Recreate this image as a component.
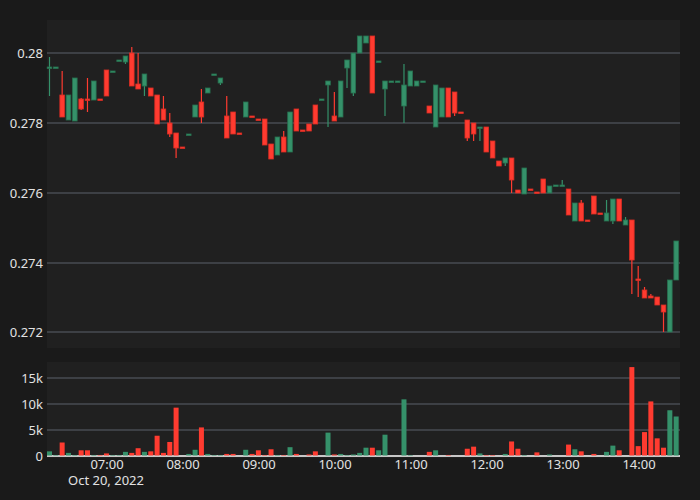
const candles: [number, number, number, number][] = [
  // [openY, closeY, highY, lowY] in pixel rows of the price pane
  [68, 67, 57, 96], [68, 67, 68, 68], [95, 117, 71, 117], [120, 95, 95, 120], [121, 78, 78, 121],
  [99, 109, 98, 110], [99, 100, 78, 112], [100, 81, 81, 100], [99, 100, 99, 100], [70, 96, 70, 96],
  [72, 71, 71, 72], [61, 60, 60, 61], [62, 56, 56, 64], [53, 86, 47, 86], [84, 89, 53, 89],
  [86, 74, 74, 96], [88, 96, 88, 96], [95, 124, 95, 124], [109, 120, 96, 120], [123, 134, 113, 137],
  [133, 148, 133, 158], [147, 148, 147, 148], [135, 134, 134, 135], [117, 105, 105, 117], [102, 117, 89, 123],
  [93, 88, 88, 93], [75, 74, 74, 75], [83, 78, 78, 85], [116, 138, 96, 138], [112, 134, 112, 134],
  [133, 134, 133, 134], [117, 102, 102, 117], [116, 117, 116, 117], [119, 120, 119, 120], [119, 145, 119, 145],
  [144, 159, 144, 159], [155, 137, 137, 155], [137, 152, 131, 152], [152, 112, 112, 152], [109, 131, 109, 131],
  [130, 131, 130, 131], [124, 131, 124, 131], [105, 124, 105, 124], [100, 99, 99, 100], [85, 81, 81, 127],
  [116, 121, 92, 121], [117, 81, 81, 117], [68, 60, 60, 88], [93, 53, 53, 96], [53, 36, 36, 53],
  [43, 36, 36, 43], [36, 93, 36, 93], [62, 61, 61, 62], [89, 81, 81, 116], [82, 81, 81, 82],
  [82, 81, 81, 82], [106, 85, 64, 123], [86, 71, 71, 86], [86, 81, 81, 86], [82, 81, 81, 82],
  [106, 113, 106, 113], [127, 85, 85, 127], [117, 88, 88, 117], [88, 117, 88, 117], [92, 113, 92, 116],
  [112, 113, 112, 113], [120, 138, 120, 141], [123, 134, 123, 141], [128, 127, 127, 141], [127, 152, 127, 152],
  [141, 158, 141, 158], [161, 166, 161, 166], [163, 158, 158, 166], [158, 180, 158, 193], [190, 193, 190, 193],
  [194, 168, 168, 194], [189, 190, 189, 190], [192, 193, 192, 193], [179, 193, 179, 193], [193, 186, 186, 193],
  [186, 185, 185, 186], [186, 185, 180, 186], [189, 215, 189, 215], [221, 203, 203, 221], [203, 221, 200, 221],
  [220, 221, 220, 221], [196, 214, 196, 214], [213, 214, 213, 214], [221, 213, 200, 221], [221, 199, 199, 224],
  [199, 221, 199, 221], [225, 220, 217, 225], [220, 260, 220, 294], [279, 280, 266, 297], [290, 298, 287, 298],
  [296, 298, 294, 298], [297, 305, 297, 305], [305, 312, 305, 332], [332, 280, 280, 332], [280, 241, 241, 280],
];

const volumes: number[] = [
  0.8, 0.1, 2.5, 0.5, 0.1, 1, 1, 0.1, 0.1, 0.4,
  0.1, 0.1, 0.7, 0.5, 1.4, 0.7, 0.8, 3.8, 0.5, 2.6,
  9.2, 0, 0.3, 1.1, 5.4, 0.3, 0.1, 0.1, 0.3, 0.3,
  0, 1.1, 0.3, 1, 0.1, 1.2, 0.1, 0.1, 1.6, 0.3,
  0, 0.2, 0.8, 0, 4.4, 0.2, 0.3, 0.1, 0.2, 0.5,
  1.5, 1.5, 1, 4, 0, 0, 10.8, 0.1, 0, 0,
  0.7, 1, 0, 0.1, 0, 0, 1.3, 1.7, 0.4, 0.1,
  0.1, 0, 0.3, 2.7, 1.3, 0.1, 0, 0.6, 0, 0.2,
  0, 0, 2.1, 1.2, 0.8, 0, 0.3, 0, 0.7, 1.9,
  1, 0, 17, 1.8, 4.5, 10.4, 3.3, 1.5, 8.7, 7.5,
];

const GREEN = "#35916a";
const GREEN_EDGE = "#27704f";
const RED = "#ff3b30";
const RED_EDGE = "#d92d24";
const GRID = "#5b616b";
const LABEL = "#e2e2e2";

const xOf = (i: number) => 49.5 + i * 6.33;

const priceTicks = [
  { y: 53, t: "0.28" },
  { y: 123, t: "0.278" },
  { y: 193, t: "0.276" },
  { y: 263, t: "0.274" },
  { y: 332, t: "0.272" },
];

const volTicks = [
  { y: 378, t: "15k" },
  { y: 404, t: "10k" },
  { y: 430, t: "5k" },
  { y: 456, t: "0" },
];

const hours = ["07:00", "08:00", "09:00", "10:00", "11:00", "12:00", "13:00", "14:00"];

export default function App() {
  return (
    <div className="w-[700px] h-[500px] bg-[#1a1a1a] overflow-hidden font-['DejaVu_Sans',sans-serif]">
      <svg width="700" height="500" viewBox="0 0 700 500">
        <rect x="47" y="20" width="633" height="328" fill="#202020" />
        <rect x="47" y="362" width="633" height="96" fill="#202020" />

        {priceTicks.map((p) => (
          <g key={p.t}>
            <line x1="47" x2="680" y1={p.y} y2={p.y} stroke={GRID} strokeWidth="1" />
            <text x="43" y={p.y + 4.5} textAnchor="end" fontSize="13" fill={LABEL}>{p.t}</text>
          </g>
        ))}

        {volTicks.map((p) => (
          <g key={p.t}>
            <line x1="47" x2="680" y1={p.y} y2={p.y} stroke={p.t === "0" ? "#ffffff" : GRID} strokeWidth={p.t === "0" ? 1.5 : 1} />
            <text x="43" y={p.y + 4.5} textAnchor="end" fontSize="13" fill={LABEL}>{p.t}</text>
          </g>
        ))}

        {candles.map(([o, c, h, l], i) => {
          const up = c < o;
          const x = xOf(i);
          const top = Math.min(o, c);
          const bh = Math.max(Math.abs(o - c), 1.5);
          return (
            <g key={i}>
              <line x1={x} x2={x} y1={h} y2={l} stroke={up ? GREEN : RED} strokeWidth="1.2" />
              <rect x={x - 2.3} y={top} width="4.6" height={bh} fill={up ? GREEN : RED} stroke={up ? GREEN_EDGE : RED_EDGE} strokeWidth="0.8" />
            </g>
          );
        })}

        {volumes.map((v, i) => {
          if (v <= 0) return null;
          const [o, c] = candles[i];
          const up = c < o;
          const hgt = v * 5.2;
          return (
            <rect key={i} x={xOf(i) - 2.5} y={455.5 - hgt} width="5" height={hgt} fill={up ? GREEN : RED} />
          );
        })}

        {hours.map((h, i) => (
          <text key={h} x={107 + i * 76} y={469} textAnchor="middle" fontSize="13" fill={LABEL}>{h}</text>
        ))}
        <text x="68" y="485" fontSize="13" fill={LABEL}>Oct 20, 2022</text>
      </svg>
    </div>
  );
}
